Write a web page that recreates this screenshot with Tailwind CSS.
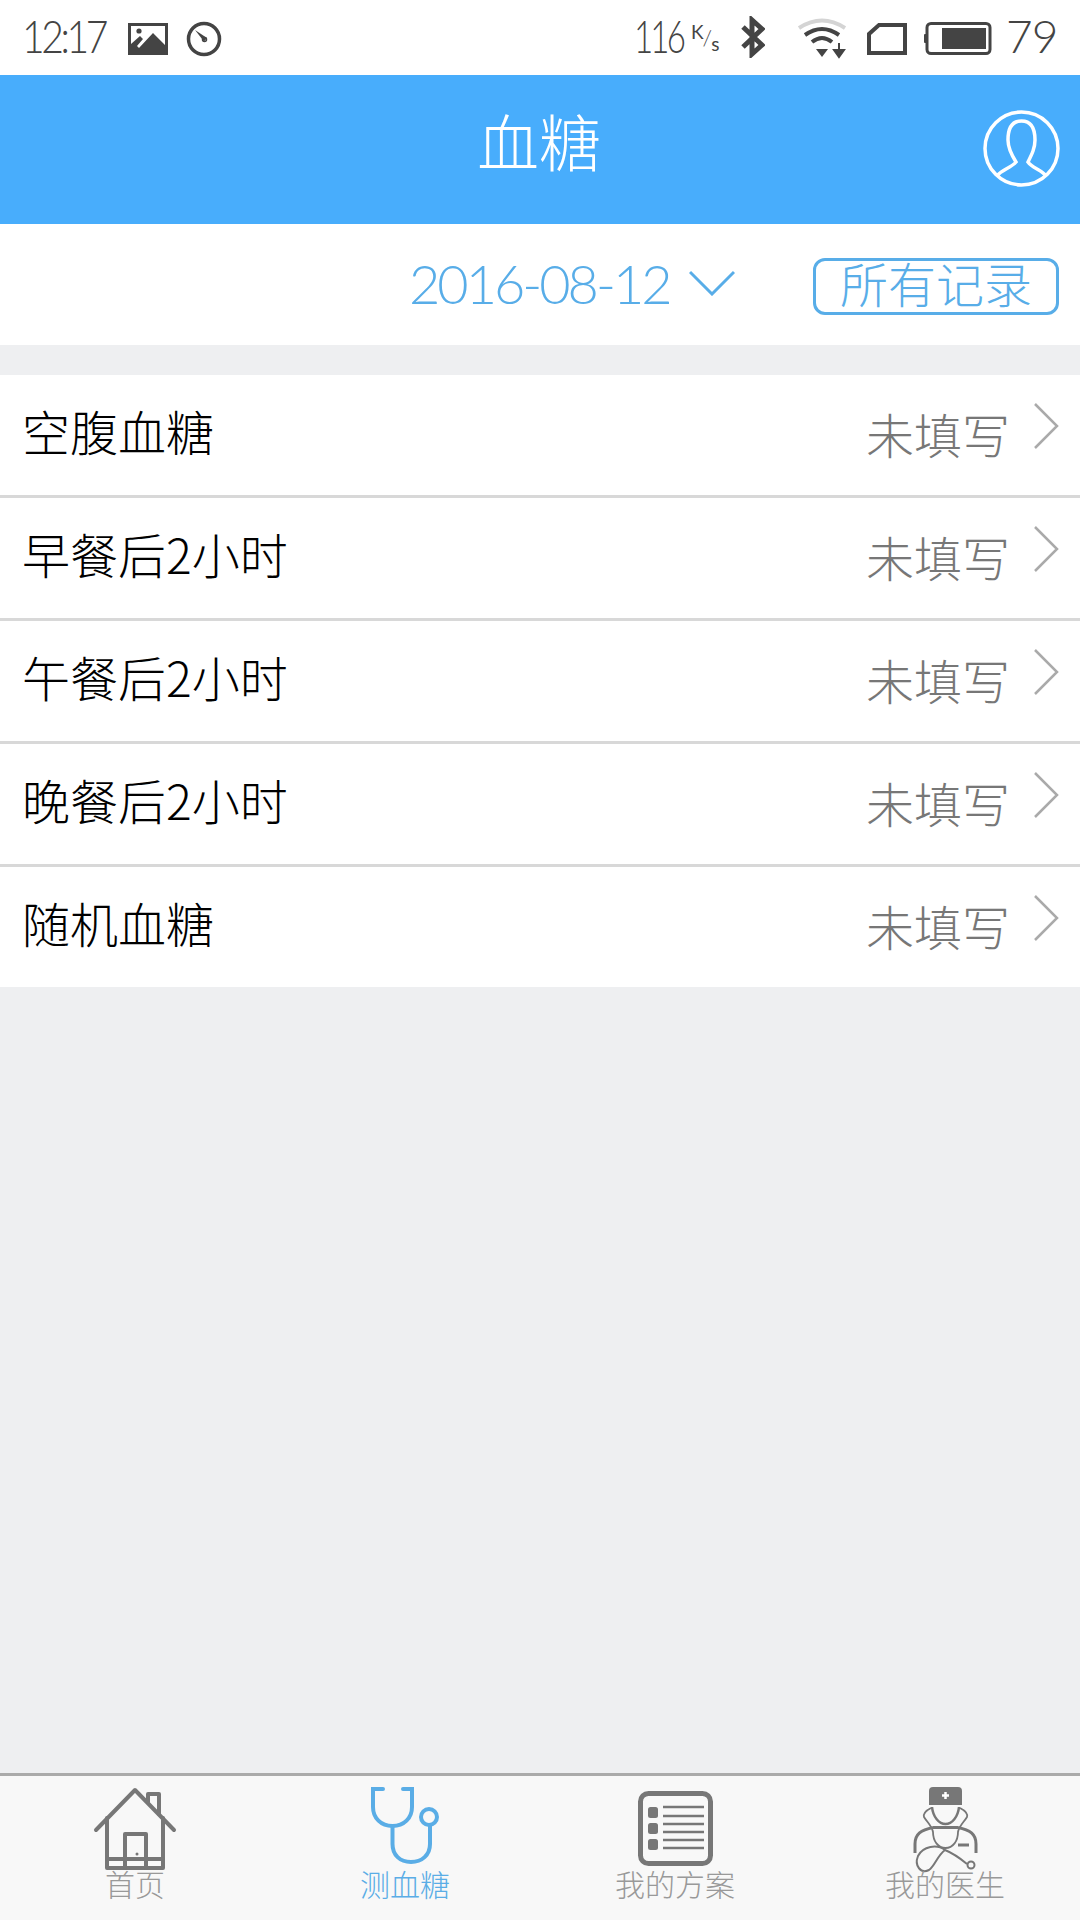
<!DOCTYPE html>
<html lang="zh"><head><meta charset="utf-8">
<script src="https://cdn.jsdelivr.net/npm/@tailwindcss/browser@4"></script>
</head>
<body class="m-0 bg-[#eeeff1]">
<div class="w-[1080px] h-[1920px] flex flex-col bg-[#eeeff1] font-['Noto_Sans_CJK_SC','Noto_Sans',sans-serif] font-light overflow-hidden">
  <!-- status bar -->
  <div class="h-[75px] bg-white flex items-center text-[#444] font-['Lato',sans-serif] font-light relative whitespace-nowrap">
    <span class="ml-[22px] w-[84px] text-[46px] leading-[75px] tracking-[-4px] font-light origin-left scale-x-[0.85] -mt-[4px]">12:17</span>
    <svg class="ml-[22px] mt-[2px]" width="40" height="32" viewBox="0 0 40 32"><path fill="#444" fill-rule="evenodd" d="M0 0H40V32H0ZM3 3V21L12 13 15 16 9 23 11 25 25 10 37 22V3Z"/><circle cx="11" cy="8" r="2.6" fill="#444"/></svg>
    <svg class="ml-[18px] mt-[2px]" width="36" height="36" viewBox="0 0 36 36"><circle cx="18" cy="18" r="15.5" fill="none" stroke="#444" stroke-width="3.5"/><path d="M9 9L21 17 18 20.500Z" fill="#444"/><circle cx="18.500" cy="18.500" r="2" fill="none" stroke="#444" stroke-width="1.500"/></svg>
    <span class="ml-[412px] w-[50px] text-[46px] leading-[75px] tracking-[-4px] font-light origin-left scale-x-[0.72] -mt-[4px]">116</span>
    <span class="ml-[7px] w-[30px] flex items-center text-[#444] font-normal tracking-[-1px]">
      <span class="text-[19px] leading-[20px] -translate-y-[6px]">K</span><span class="text-[22px] leading-[20px] font-light">/</span><span class="text-[19px] leading-[20px] translate-y-[6px]">s</span>
    </span>
    <svg class="ml-[20px] -mt-[1px]" width="24" height="42" viewBox="0 0 24 42"><path d="M2 11L21 29 11 38V4L21 13 2 31" fill="none" stroke="#444" stroke-width="5"/></svg>
    <svg class="ml-[33px]" width="48" height="42" viewBox="0 0 48 42"><path d="M1 11Q24 -4 47 11" fill="none" stroke="#d4d4d4" stroke-width="4"/><path d="M7 18Q24 6 41 18" fill="none" stroke="#444" stroke-width="4"/><path d="M14 25Q24 17 34 25" fill="none" stroke="#444" stroke-width="4"/><path d="M18 32H30L24 40Z" fill="#444"/><path d="M41 26V34M36 33H46L41 40Z" fill="#444" stroke="#444" stroke-width="2"/></svg>
    <svg class="ml-[21px] mt-[2px]" width="40" height="32" viewBox="0 0 40 32"><path d="M2 30V11L12 2H38V30Z" fill="none" stroke="#444" stroke-width="4"/></svg>
    <svg class="ml-[17px] mt-[2px]" width="68" height="33" viewBox="0 0 68 33"><rect x="3" y="1.500" width="63" height="30" rx="4" fill="none" stroke="#444" stroke-width="3"/><rect x="18" y="6" width="44" height="21" fill="#444"/><rect x="0" y="12" width="3" height="9" rx="1" fill="#444"/></svg>
    <span class="ml-[14px] text-[46px] leading-[75px] font-light tracking-[-1px] -mt-[4px]">79</span>
  </div>
  <!-- header -->
  <div class="h-[149px] bg-[#48adfc] relative flex items-center justify-center">
    <span class="text-white text-[62px] leading-[80px] font-light -mt-[20px] -ml-[2px]">血糖</span>
    <svg class="absolute left-[983px] top-[35px]" width="77" height="77" viewBox="0 0 77 77" fill="none" stroke="#fff" stroke-width="3.500"><circle cx="38.500" cy="38.500" r="36.500"/><path d="M14 66C18 60 28 58 33 52 28 44 25 38 25 30 25 18 29 11 38.500 11 48 11 52 18 52 30 52 38 49 44 45 52 49 58 59 60 63 66"/></svg>
  </div>
  <!-- date row -->
  <div class="h-[121px] bg-white flex items-center text-[#58ade8] whitespace-nowrap">
    <span class="ml-[409px] w-[261px] text-[54px] leading-[60px] font-['Lato',sans-serif] font-light tracking-[-3px] -mt-[2px]">2016-08-12</span>
    <svg class="ml-[19px] -mt-[4px]" width="46" height="26" viewBox="0 0 46 26"><path d="M1 2L23 24 45 2" fill="none" stroke="#58ade8" stroke-width="3"/></svg>
    <div class="ml-[78px] w-[246px] h-[57px] border-[3px] border-[#58ade8] rounded-[12px] flex items-center justify-center text-[48px] leading-[54px] mt-[4px]"><span class="-mt-[10px]">所有记录</span></div>
  </div>
  <div class="h-[30px]"></div>
  <!-- list -->
  <div class="flex flex-col bg-white">
    <div class="h-[123px] border-b-[3px] border-[#d8d8d8] flex items-center pl-[22px] pr-[21px]">
      <span class="flex-1 text-[48px] leading-[60px] text-black -mt-[10px]">空腹血糖</span>
      <span class="text-[48px] leading-[60px] text-[#777] -mt-[5px]">未填写</span>
      <svg class="ml-[23px] -mt-[18px]" width="26" height="46" viewBox="0 0 26 46"><path d="M2 1L24 23 2 45" fill="none" stroke="#aaa" stroke-width="2.500"/></svg>
    </div>
    <div class="h-[123px] border-b-[3px] border-[#d8d8d8] flex items-center pl-[22px] pr-[21px]">
      <span class="flex-1 text-[48px] leading-[60px] text-black -mt-[10px]">早餐后2小时</span>
      <span class="text-[48px] leading-[60px] text-[#777] -mt-[5px]">未填写</span>
      <svg class="ml-[23px] -mt-[18px]" width="26" height="46" viewBox="0 0 26 46"><path d="M2 1L24 23 2 45" fill="none" stroke="#aaa" stroke-width="2.500"/></svg>
    </div>
    <div class="h-[123px] border-b-[3px] border-[#d8d8d8] flex items-center pl-[22px] pr-[21px]">
      <span class="flex-1 text-[48px] leading-[60px] text-black -mt-[10px]">午餐后2小时</span>
      <span class="text-[48px] leading-[60px] text-[#777] -mt-[5px]">未填写</span>
      <svg class="ml-[23px] -mt-[18px]" width="26" height="46" viewBox="0 0 26 46"><path d="M2 1L24 23 2 45" fill="none" stroke="#aaa" stroke-width="2.500"/></svg>
    </div>
    <div class="h-[123px] border-b-[3px] border-[#d8d8d8] flex items-center pl-[22px] pr-[21px]">
      <span class="flex-1 text-[48px] leading-[60px] text-black -mt-[10px]">晚餐后2小时</span>
      <span class="text-[48px] leading-[60px] text-[#777] -mt-[5px]">未填写</span>
      <svg class="ml-[23px] -mt-[18px]" width="26" height="46" viewBox="0 0 26 46"><path d="M2 1L24 23 2 45" fill="none" stroke="#aaa" stroke-width="2.500"/></svg>
    </div>
    <div class="h-[120px] flex items-center pl-[22px] pr-[21px]">
      <span class="flex-1 text-[48px] leading-[60px] text-black -mt-[10px]">随机血糖</span>
      <span class="text-[48px] leading-[60px] text-[#777] -mt-[5px]">未填写</span>
      <svg class="ml-[23px] -mt-[18px]" width="26" height="46" viewBox="0 0 26 46"><path d="M2 1L24 23 2 45" fill="none" stroke="#aaa" stroke-width="2.500"/></svg>
    </div>
  </div>
  <div class="flex-1"></div>
  <!-- tab bar -->
  <div class="h-[147px] bg-[#f8f8f8] border-t-[3px] border-[#aaa] grid grid-cols-4 text-[30px] leading-[32px] text-[#999]">
    <div class="flex flex-col items-center">
      <svg class="mt-[8px]" width="92" height="92" viewBox="0 0 92 92" fill="none" stroke="#777" stroke-width="4" stroke-linejoin="round" stroke-linecap="round"><path d="M7 46L46 6 85 46"/><path d="M18 34V84H74V34"/><path d="M18 75H74"/><path d="M59 18V10H70V30"/><path d="M36 84V50H57V84"/><circle cx="48" cy="70" r="1.500" fill="#777" stroke="none"/></svg>
      <span class="-mt-[9px]">首页</span>
    </div>
    <div class="flex flex-col items-center text-[#5aade6]">
      <svg class="mt-[8px]" width="92" height="92" viewBox="0 0 92 92" fill="none" stroke="#5aade6" stroke-width="4" stroke-linecap="round"><path d="M24 5H14V23C14 34 22 42 33.500 42 45 42 53 34 53 23V5H44"/><path d="M33.500 42V60C33.500 71 41 78 52 78 63 78 71 71 71 60V41"/><circle cx="70" cy="33" r="8"/></svg>
      <span class="-mt-[9px]">测血糖</span>
    </div>
    <div class="flex flex-col items-center">
      <svg class="mt-[8px]" width="92" height="92" viewBox="0 0 92 92" fill="none" stroke="#777"><rect x="11.500" y="9.500" width="70" height="70" rx="8" stroke-width="5"/><rect x="19" y="23" width="10" height="11" rx="2.500" fill="#777" stroke="none"/><rect x="19" y="39" width="10" height="11" rx="2.500" fill="#777" stroke="none"/><rect x="19" y="55" width="10" height="11" rx="2.500" fill="#777" stroke="none"/><path stroke-width="2.500" d="M34 23H75M34 32H75M34 40H75M34 48H75M34 56H75M34 64H75"/></svg>
      <span class="-mt-[9px]">我的方案</span>
    </div>
    <div class="flex flex-col items-center">
      <svg class="mt-[8px]" width="92" height="92" viewBox="0 0 92 92" fill="none" stroke="#777" stroke-width="2"><path d="M30 7Q30 3 34 3H59Q63 3 63 7V21H30Z" fill="#777" stroke="none"/><path d="M46.500 8V15M43 11.500H50" stroke="#fff" stroke-width="2.500"/><path d="M33 23C34 33 40 40 46.500 40 53 40 59 33 60 23" stroke-width="2.500"/><path d="M32 24C28 26 24 29 25 33 28 38 33 42 34 48 34 57 39 64 46.500 64 54 64 59 57 59 48 60 42 65 38 68 33 69 29 65 26 61 24" stroke-width="1.800"/><path d="M16 69V60C16 50 22 46 34 43.500M77 69V60C77 50 71 46 59 43.500" stroke-width="3"/><path d="M34 43.500H59" stroke-width="3"/><path d="M59 61H70" stroke-width="3"/><path d="M46 66C38 60 24 62 19 72 15 82 22 90 30 86 36 82 38 72 46 66Q56 70 68 80" stroke-width="2"/><circle cx="72" cy="81" r="3.500" stroke-width="2"/></svg>
      <span class="-mt-[9px]">我的医生</span>
    </div>
  </div>
</div>
</body></html>
